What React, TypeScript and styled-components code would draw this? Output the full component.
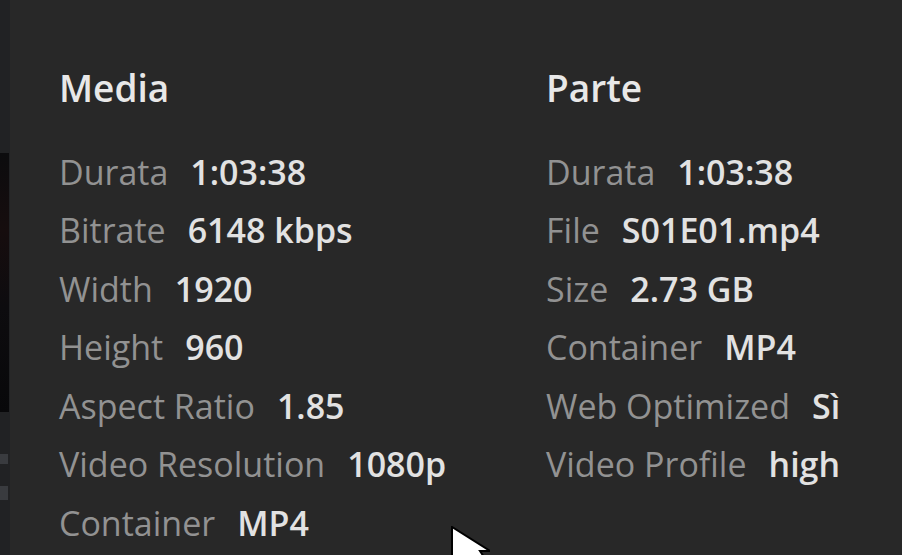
import React from "react";
import styled, { createGlobalStyle } from "styled-components";

const Global = createGlobalStyle`
  html, body { margin: 0; padding: 0; background: #282828; }
  body { width: 902px; height: 555px; overflow: hidden; }
  #root { width: 902px; height: 555px; }
`;

const Screen = styled.div`
  position: relative;
  display: flex;
  width: 902px;
  height: 555px;
  overflow: hidden;
  background: #282828;
  font-family: "Open Sans", "Noto Sans", sans-serif;
`;

const SideStrip = styled.div`
  width: 10px;
  flex: none;
  display: flex;
  flex-direction: column;
  background: #212224;
  padding-top: 153px;
  box-sizing: border-box;
`;

const Poster = styled.div`
  height: 259px;
  width: 9px;
  background: linear-gradient(180deg, #0c0c0e 0%, #160d0e 30%, #0d0c0f 60%, #08080a 100%);
`;

const StripText = styled.div`
  margin-top: 42px;
  width: 8px;
  height: 10px;
  background: #4a4d51;
  opacity: 0.6;
  & + & { margin-top: 22px; height: 14px; }
`;

const Panel = styled.div`
  flex: 1;
  display: grid;
  grid-template-columns: 487px 1fr;
  padding: 59px 0 0 49px;
  box-sizing: border-box;
`;

const Column = styled.section`
  display: flex;
  flex-direction: column;
`;

const Heading = styled.h2`
  margin: 0 0 25px;
  font-size: 37px;
  line-height: 58.5px;
  font-weight: 600;
  color: #e8e8e8;
`;

const Row = styled.div`
  display: flex;
  gap: 22px;
  font-size: 34px;
  line-height: 58.5px;
  white-space: nowrap;
`;

const Label = styled.span`
  color: #929292;
  font-weight: 400;
`;

const Value = styled.span`
  color: #e2e2e2;
  font-weight: 600;
`;

const Cursor = styled.svg`
  position: absolute;
  left: 450px;
  top: 526px;
`;

const media: [string, string][] = [
  ["Durata", "1:03:38"],
  ["Bitrate", "6148 kbps"],
  ["Width", "1920"],
  ["Height", "960"],
  ["Aspect Ratio", "1.85"],
  ["Video Resolution", "1080p"],
  ["Container", "MP4"],
];

const parte: [string, string][] = [
  ["Durata", "1:03:38"],
  ["File", "S01E01.mp4"],
  ["Size", "2.73 GB"],
  ["Container", "MP4"],
  ["Web Optimized", "Sì"],
  ["Video Profile", "high"],
];

const Section = ({ title, rows }: { title: string; rows: [string, string][] }) => (
  <Column>
    <Heading>{title}</Heading>
    {rows.map(([l, v]) => (
      <Row key={l}>
        <Label>{l}</Label>
        <Value>{v}</Value>
      </Row>
    ))}
  </Column>
);

export default function App() {
  return (
    <Screen>
      <Global />
      <SideStrip>
        <Poster />
        <StripText />
        <StripText />
      </SideStrip>
      <Panel>
        <Section title="Media" rows={media} />
        <Section title="Parte" rows={parte} />
      </Panel>
      <Cursor width="40" height="40" viewBox="0 0 40 40">
        <path d="M2 1 L2 40 L12 31 L20 40 L40 40 L30 25 L40 25 Z" fill="#ffffff" stroke="#000" strokeWidth="2" />
      </Cursor>
    </Screen>
  );
}
